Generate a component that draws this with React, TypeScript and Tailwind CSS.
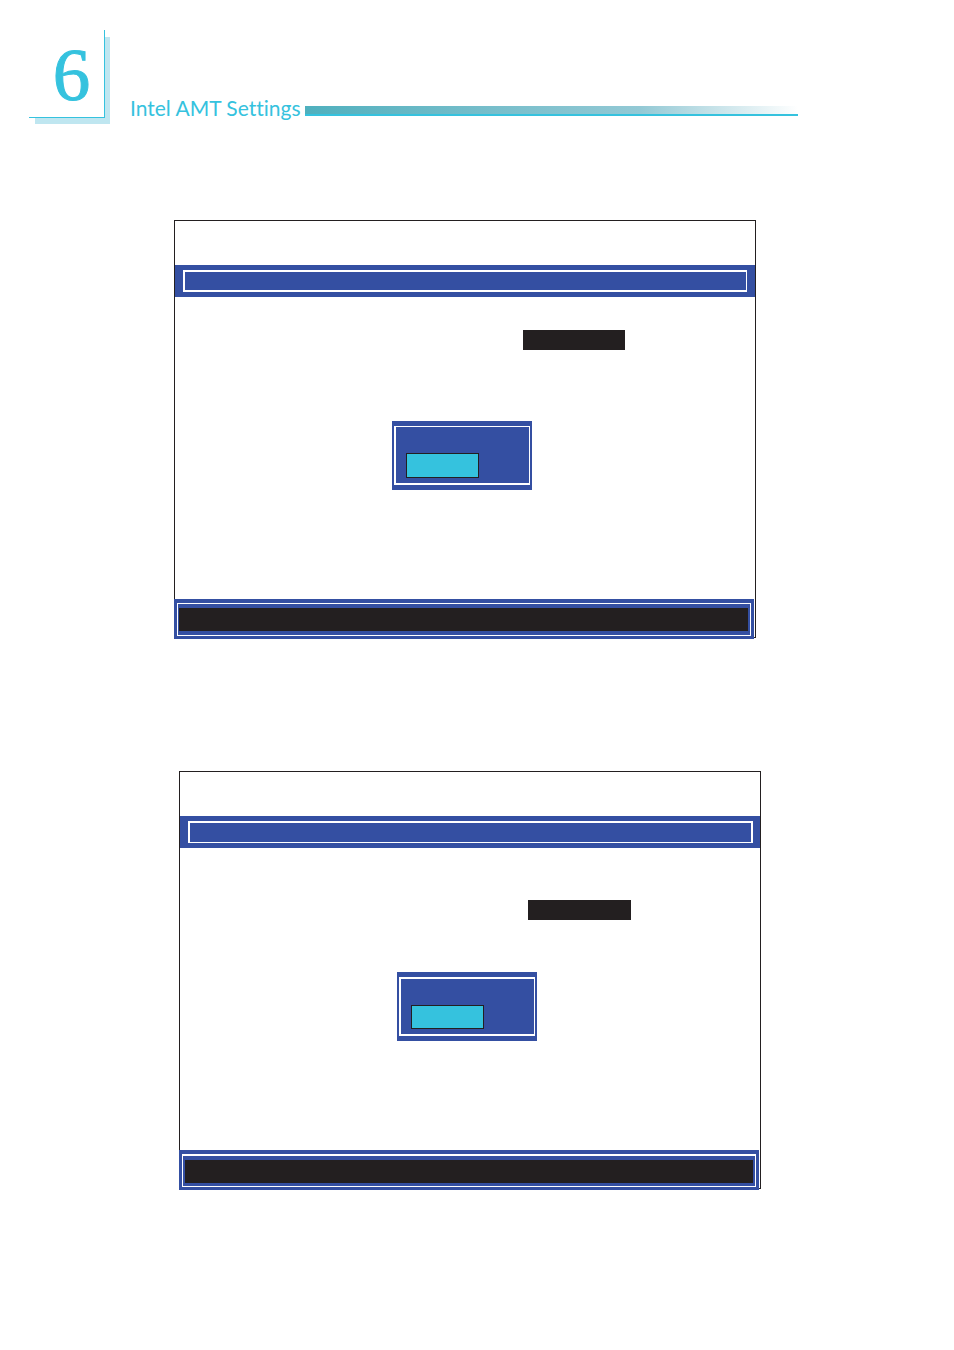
type ScreenProps = {
  className: string;
  title: string;
  fieldClass: string;
  dialogClass: string;
  titleBoxClass: string;
  dialogBoxClass: string;
  inputClass: string;
  footerClass: string;
};

function BiosScreen(props: ScreenProps) {
  return (
    <section
      aria-label={props.title}
      className={`w-full max-w-[582px] border border-[#231f20] pt-11 ${props.className}`}
    >
      <div className="h-8 bg-[#344fa2] px-2 py-[5px]">
        <div className={`h-full border-white ${props.titleBoxClass}`} />
      </div>

      <div className={`ml-[348px] h-5 bg-[#231f20] ${props.fieldClass}`} />

      <div
        className={`ml-[217px] h-[69px] w-[140px] bg-[#344fa2] px-[2px] py-[5px] ${props.dialogClass}`}
      >
        <div className={`flex h-full items-end border-white pb-[5px] pl-[10px] ${props.dialogBoxClass}`}>
          <div className={`w-[73px] border border-[#231f20] bg-[#35c2de] ${props.inputClass}`} />
        </div>
      </div>

      <div className="relative mt-[109px] -mb-[2px] -ml-px mr-px h-10 bg-[#344fa2] px-[3px] pt-1 pb-[3px]">
        <div className={`h-full border-white ${props.footerClass}`}>
          <div className="h-[23px] bg-[#231f20]" />
        </div>
      </div>
    </section>
  );
}

export default function App() {
  return (
    <div className="min-h-screen bg-white pb-40">
      <header className="flex pt-[30px] pl-[29px] text-[#35c2de]">
        <div className="relative h-[88px] w-[76px] shrink-0">
          <div className="absolute top-[7px] -right-[5px] -bottom-[6px] left-[6px] bg-[#bfe6f0]" />
          <div className="relative flex h-full items-center justify-center border-r border-b border-[#35c2de] bg-white pt-[2px] pl-[10px] font-['Liberation_Serif',serif] text-[75px] leading-none [-webkit-text-stroke:1px_#35c2de]">
            6
          </div>
        </div>
        <h1 className="ml-[25px] h-[90px] shrink-0 pt-[66px] font-['Lato',sans-serif] text-[21px] leading-6 whitespace-nowrap [font-variant-ligatures:none]">
          Intel AMT Settings
        </h1>
        <div className="mt-[76px] mr-[156px] ml-1 h-[10px] flex-1 border-b-2 border-[#35c2de] bg-linear-to-r from-[#4fb0be] via-[#93c9d5] via-68% to-white" />
      </header>

      <main>
        <BiosScreen
          title="First settings screen"
          className="mt-[100px] ml-[174px]"
          titleBoxClass="border-2 border-r"
          fieldClass="mt-[33px] w-[102px]"
          dialogClass="mt-[71px]"
          dialogBoxClass="border-t border-r border-b-2 border-l-2"
          inputClass="h-[25px]"
          footerClass="border pt-1 pr-[2px] pl-px"
        />
        <BiosScreen
          title="Second settings screen"
          className="mt-[133px] ml-[179px]"
          titleBoxClass="-mr-px border-2 border-b"
          fieldClass="mt-[52px] w-[103px]"
          dialogClass="mt-[52px]"
          dialogBoxClass="border-2 border-r"
          inputClass="h-6"
          footerClass="border border-t-2 pt-1 pr-[2px] pl-[2px]"
        />
      </main>
    </div>
  );
}
